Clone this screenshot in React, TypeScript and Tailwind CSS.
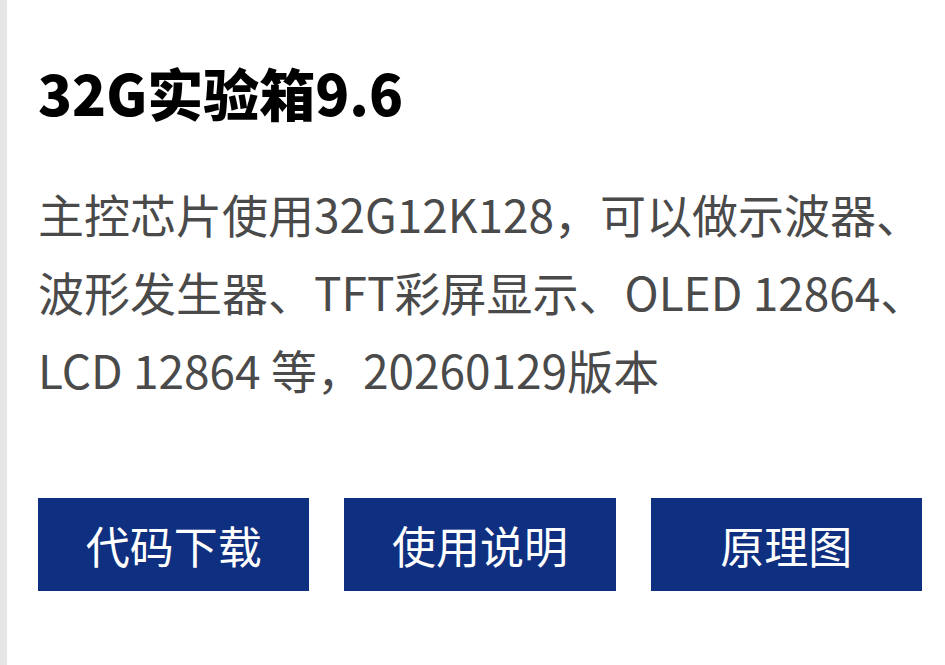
import React from "react";

const cjk = '"Microsoft YaHei", "Noto Sans CJK SC", "Noto Sans", sans-serif';

const lines = [
  "主控芯片使用32G12K128，可以做示波器、",
  "波形发生器、TFT彩屏显示、OLED 12864、",
  "LCD 12864 等，20260129版本",
];

const actions = ["代码下载", "使用说明", "原理图"];

export default function App() {
  return (
    <div
      className="min-h-screen w-full bg-white border-l-[7px] border-[#e6e6e6] pl-[31px] pr-[23px] pt-[58px]"
      style={{ fontFamily: cjk }}
    >
      <h1 className="text-[56px] leading-[68px] font-black text-black whitespace-nowrap">
        32G实验箱9.6
      </h1>
      <p className="mt-[48px] text-[46px] leading-[78px] text-[#4a4a4a]">
        {lines.map((l) => (
          <span key={l} className="block whitespace-nowrap">
            {l}
          </span>
        ))}
      </p>
      <div className="mt-[90px] grid grid-cols-3 gap-[35px]">
        {actions.map((a) => (
          <button
            key={a}
            className="h-[93px] bg-[#0f2f80] text-white text-[44px] flex items-center justify-center"
          >
            {a}
          </button>
        ))}
      </div>
    </div>
  );
}
